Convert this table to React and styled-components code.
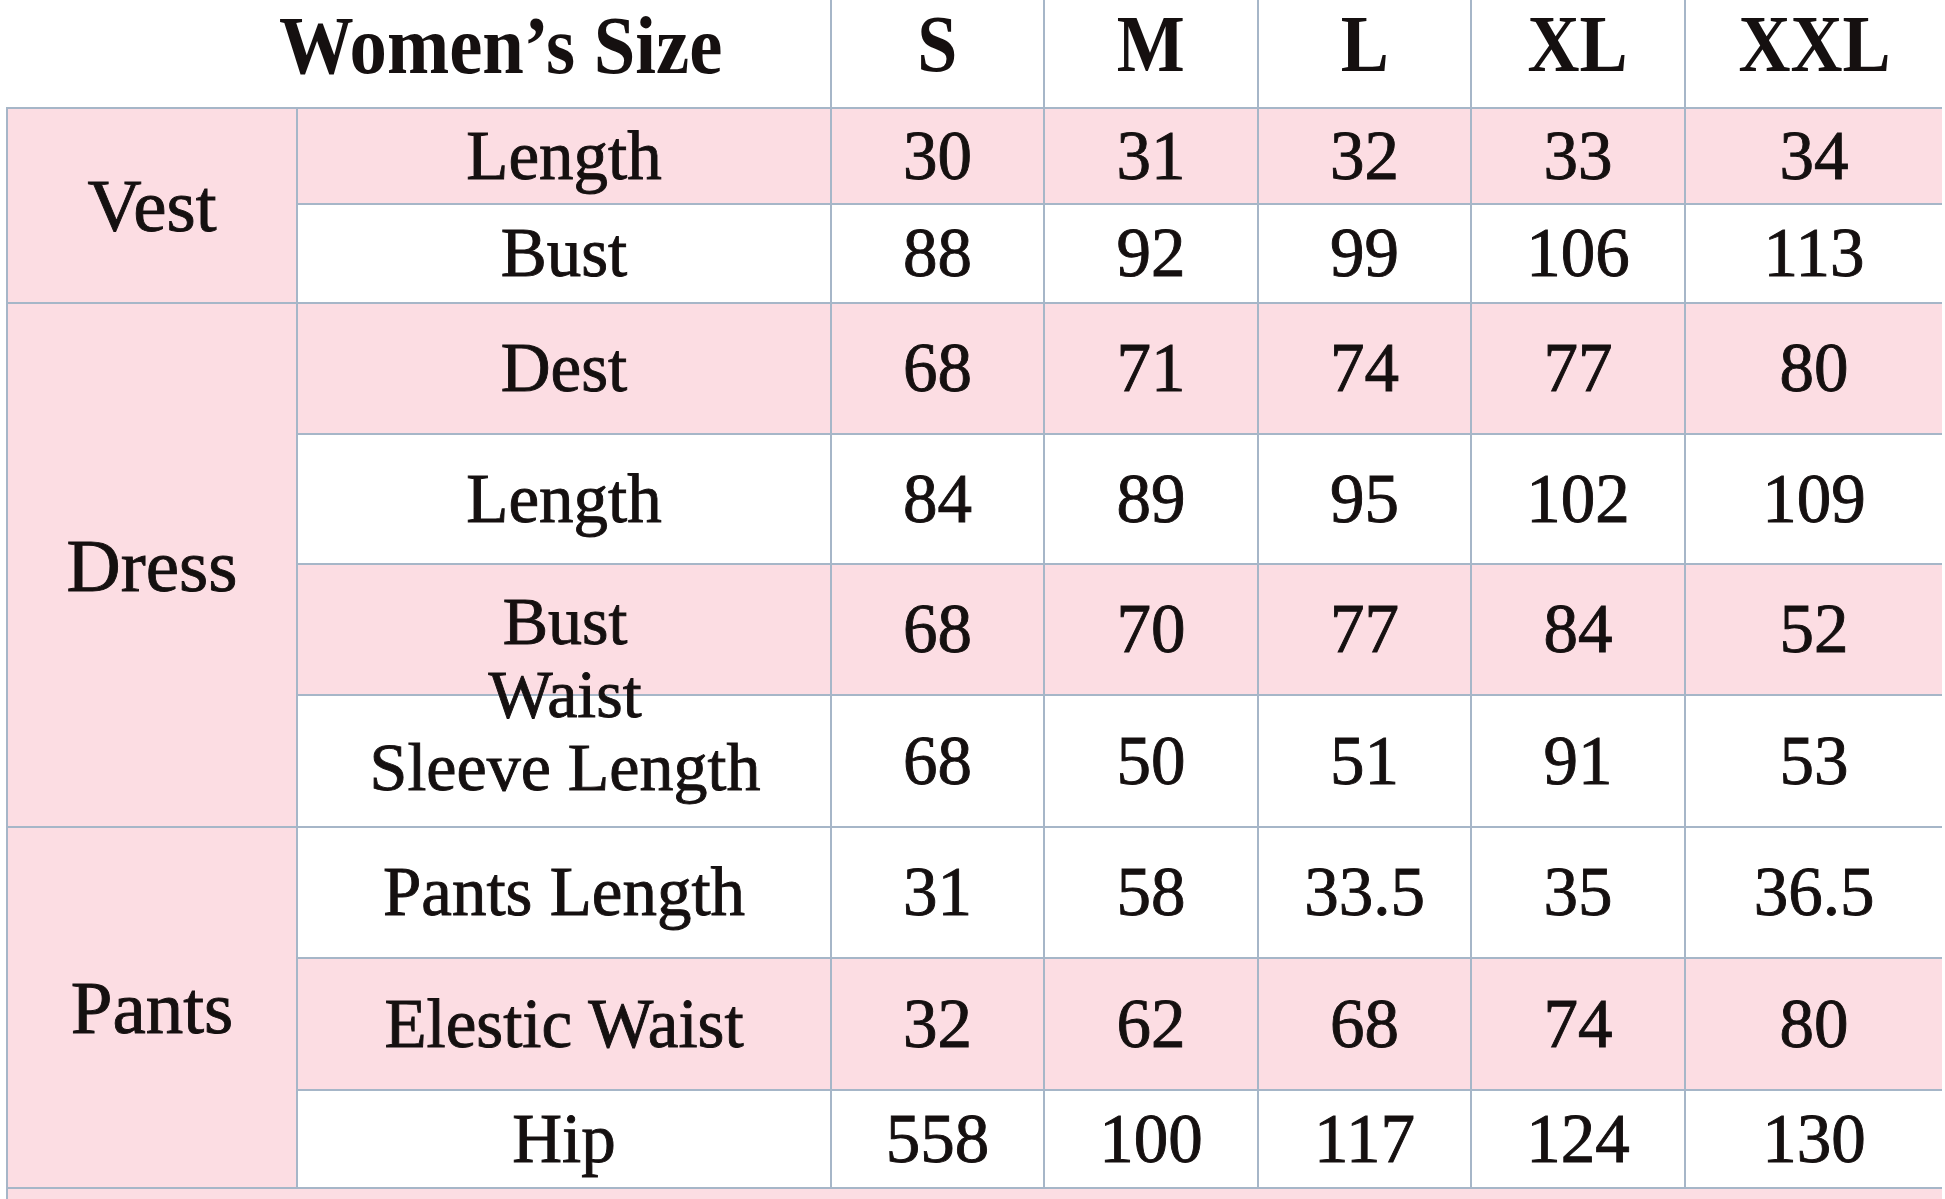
import React from "react";
import styled, { createGlobalStyle } from "styled-components";

const GlobalStyle = createGlobalStyle`
  html, body {
    margin: 0;
    padding: 0;
    background: #ffffff;
    overflow: hidden;
  }
  body {
    font-family: "Liberation Serif", "Times New Roman", serif;
    color: #151010;
  }
`;

const PINK = "#fcdde3";
const LINE = "#a6b6c8";
const INK = "#151010";

const Page = styled.div`
  width: 1945px;
  height: 1199px;
  padding-left: 6px;
  box-sizing: border-box;
  overflow: hidden;
`;

const Table = styled.div`
  display: grid;
  grid-template-columns: 292px 534px 213px 214px 213px 214px 256px;
  grid-template-rows: 109px 96px 99px 131px 130px 131px 132px 131px 132px 98px 60px;
`;

const Cell = styled.div`
  box-sizing: border-box;
  grid-row: ${(p) => p.$row} / span ${(p) => p.$rowSpan || 1};
  grid-column: ${(p) => p.$col} / span ${(p) => p.$colSpan || 1};
  display: flex;
  align-items: center;
  justify-content: center;
  background: ${(p) => (p.$pink ? PINK : "#ffffff")};
  border-bottom: 2px solid ${LINE};
  border-right: ${(p) => (p.$last ? "none" : `2px solid ${LINE}`)};
  border-left: ${(p) => (p.$first ? `2px solid ${LINE}` : "none")};
  font-size: 69px;
  line-height: 1;
  -webkit-text-stroke: 0.9px ${INK};
  white-space: nowrap;
`;

const HeaderCell = styled(Cell)`
  align-items: flex-start;
  justify-content: ${(p) => (p.$title ? "flex-start" : "center")};
  padding-top: ${(p) => (p.$title ? "6px" : "6px")};
  padding-left: ${(p) => (p.$title ? "273px" : "0")};
  background: #ffffff;
  border-left: none;
  -webkit-text-stroke: 0;
`;

const HeaderText = styled.span`
  display: inline-block;
  font-weight: 700;
  font-size: ${(p) => (p.$title ? "83px" : "80px")};
  line-height: 0.95;
  transform: scaleX(${(p) => (p.$title ? 0.9 : 0.9)});
  transform-origin: ${(p) => (p.$title ? "left center" : "center")};
`;

const GroupCell = styled(Cell)`
  font-size: 75px;
  background: ${PINK};
`;

const MergedLabel = styled.div`
  grid-row: ${(p) => p.$row} / span 2;
  grid-column: 2 / span 1;
  z-index: 1;
  display: flex;
  flex-direction: column;
  align-items: center;
  justify-content: center;
  font-size: 68px;
  line-height: 73px;
  padding-bottom: 4px;
  -webkit-text-stroke: 0.9px ${INK};
  white-space: nowrap;
  pointer-events: none;
`;

const BottomStrip = styled.div`
  grid-row: ${(p) => p.$row} / span 1;
  grid-column: 1 / span 7;
  background: ${PINK};
  border-left: 2px solid ${LINE};
`;

const sizes = ["S", "M", "L", "XL", "XXL"];

const groups = [
  {
    name: "Vest",
    rows: [
      { label: "Length", values: ["30", "31", "32", "33", "34"], pink: true },
      { label: "Bust", values: ["88", "92", "99", "106", "113"] },
    ],
  },
  {
    name: "Dress",
    rows: [
      { label: "Dest", values: ["68", "71", "74", "77", "80"], pink: true },
      { label: "Length", values: ["84", "89", "95", "102", "109"] },
      {
        label: "",
        merged: ["Bust", "Waist", "Sleeve Length"],
        values: ["68", "70", "77", "84", "52"],
        pink: true,
      },
      { label: "", values: ["68", "50", "51", "91", "53"] },
    ],
  },
  {
    name: "Pants",
    rows: [
      { label: "Pants Length", values: ["31", "58", "33.5", "35", "36.5"] },
      { label: "Elestic Waist", values: ["32", "62", "68", "74", "80"], pink: true },
      { label: "Hip", values: ["558", "100", "117", "124", "130"] },
    ],
  },
];

export default function App() {
  const cells = [];
  let row = 2;
  groups.forEach((g) => {
    cells.push(
      <GroupCell key={`g-${g.name}`} $row={row} $rowSpan={g.rows.length} $col={1} $first>
        {g.name}
      </GroupCell>
    );
    g.rows.forEach((r, i) => {
      const rr = row + i;
      cells.push(
        <Cell key={`l-${rr}`} $row={rr} $col={2} $pink={r.pink}>
          {r.label}
        </Cell>
      );
      if (r.merged) {
        cells.push(
          <MergedLabel key={`m-${rr}`} $row={rr}>
            {r.merged.map((t) => (
              <span key={t}>{t}</span>
            ))}
          </MergedLabel>
        );
      }
      r.values.forEach((v, j) => {
        cells.push(
          <Cell key={`v-${rr}-${j}`} $row={rr} $col={3 + j} $pink={r.pink} $last={j === 4}>
            {v}
          </Cell>
        );
      });
    });
    row += g.rows.length;
  });

  return (
    <>
      <GlobalStyle />
      <Page>
        <Table>
          <HeaderCell $row={1} $col={1} $colSpan={2} $title>
            <HeaderText $title>Women’s Size</HeaderText>
          </HeaderCell>
          {sizes.map((s, i) => (
            <HeaderCell key={s} $row={1} $col={3 + i} $last={i === 4}>
              <HeaderText>{s}</HeaderText>
            </HeaderCell>
          ))}
          {cells}
          <BottomStrip $row={row} />
        </Table>
      </Page>
    </>
  );
}
